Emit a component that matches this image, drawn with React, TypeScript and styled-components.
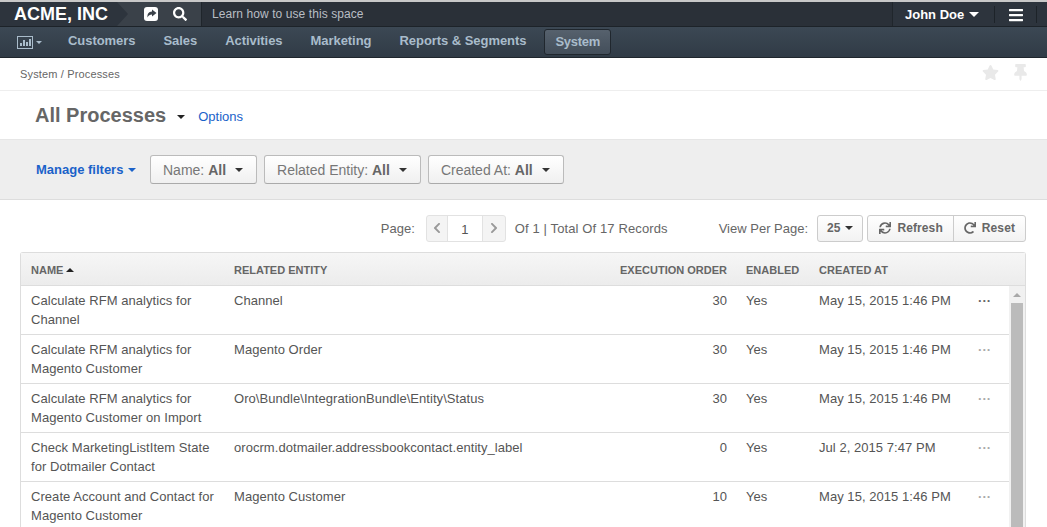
import React, { FC } from 'react';
import styled, { createGlobalStyle } from 'styled-components';
import {
  FaBars,
  FaChevronLeft,
  FaChevronRight,
  FaRedo,
  FaSearch,
  FaStar,
  FaSync,
  FaThumbtack,
} from 'react-icons/fa';

const GlobalStyle = createGlobalStyle`
  html, body {
    margin: 0;
    height: 527px;
    overflow: hidden;
    background: #fff;
    font-family: "Liberation Sans", Arial, sans-serif;
    color: #555;
  }
  * { box-sizing: border-box; }
`;

const Page = styled.div`
  width: 1047px;
  height: 527px;
  overflow: hidden;
`;

const TopBar = styled.header`
  display: flex;
  height: 27px;
  background: #2d343d;
  border-top: 2px solid #c8c8c8;
  border-bottom: 1px solid #1d2329;
  color: #fff;
`;

const Brand = styled.div`
  position: relative;
  width: 117px;
  padding-left: 14px;
  background: #2d343d;
  font-size: 18px;
  line-height: 24px;
  font-weight: bold;
  &::after {
    content: '';
    position: absolute;
    right: -11px;
    top: 0;
    border-left: 11px solid #2d343d;
    border-top: 12px solid transparent;
    border-bottom: 12px solid transparent;
  }
`;

const QuickIcons = styled.div`
  display: flex;
  align-items: center;
  gap: 15px;
  width: 84px;
  padding-left: 27px;
  background: #3a4149;
  font-size: 14px;
  svg { display: block; }
`;

const Hint = styled.div`
  flex: 1;
  padding-left: 10px;
  background: #2a3038;
  border-left: 1px solid #1f252b;
  font-size: 12px;
  letter-spacing: 0.08px;
  line-height: 24px;
  color: #b9bec4;
`;

const UserMenu = styled.div`
  display: flex;
  align-items: center;
  gap: 5px;
  width: 102px;
  padding-left: 12px;
  border-left: 1px solid #20262c;
  background: #2d343d;
  font-size: 13px;
  font-weight: bold;
`;

const MenuButton = styled.div`
  display: flex;
  align-items: center;
  justify-content: center;
  width: 43px;
  margin: 4px 0 3px;
  border-left: 1px solid #1d2329;
  border-right: 1px solid #1d2329;
  font-size: 16px;
`;

const Trailing = styled.div`
  width: 10px;
`;

const Caret = styled.span<{ $size?: number; $color?: string; $up?: boolean }>`
  display: inline-block;
  width: 0;
  height: 0;
  border-left: ${(p) => p.$size ?? 4}px solid transparent;
  border-right: ${(p) => p.$size ?? 4}px solid transparent;
  ${(p) => (p.$up ? 'border-bottom' : 'border-top')}: ${(p) => p.$size ?? 4}px solid ${(p) => p.$color ?? 'currentColor'};
`;

const Nav = styled.nav`
  display: flex;
  align-items: center;
  height: 31px;
  padding-left: 17px;
  background: linear-gradient(#3c4854, #303b46);
  border-bottom: 1px solid #1f262d;
  color: #a9bccb;
  font-size: 13px;
  font-weight: bold;
  letter-spacing: -0.05px;
`;

const ChartMenu = styled.div`
  display: flex;
  align-items: center;
  gap: 3px;
  width: 38px;
`;

const NavItem = styled.a<{ $active?: boolean }>`
  height: 26px;
  margin-right: ${(p) => (p.$active ? 0 : '1px')};
  padding: 0 ${(p) => (p.$active ? '10px' : '14px')} 0 ${(p) => (p.$active ? '10px' : '13px')};
  line-height: 24px;
  ${(p) =>
    p.$active &&
    `
    margin-left: 3px;
    border: 1px solid #20272e;
    border-radius: 3px;
    background: linear-gradient(#56616d, #434e5a);
    letter-spacing: -0.3px;
  `}
`;

const Crumbs = styled.div`
  display: flex;
  align-items: center;
  justify-content: space-between;
  height: 33px;
  padding: 0 18px 0 20px;
  border-bottom: 1px solid #eee;
  font-size: 11px;
  letter-spacing: 0.15px;
  color: #666;
`;

const PageActions = styled.div`
  display: flex;
  align-items: center;
  gap: 13px;
  margin-bottom: 3px;
  color: #e9e9e9;
  font-size: 17px;
  svg { display: block; }
`;

const TitleBar = styled.div`
  display: flex;
  align-items: center;
  height: 48px;
  padding-left: 35px;
  color: #666;
`;

const Title = styled.h1`
  margin: 0 7px 0 0;
  font-size: 20px;
  line-height: 48px;
  font-weight: bold;
`;

const TitleCaret = styled.span`
  display: flex;
  margin: 3px 13px 0 4px;
  color: #222;
`;

const BlueLink = styled.a`
  margin-top: 2px;
  color: #1a62c9;
  font-size: 13px;
`;

const FilterBar = styled.div`
  display: flex;
  align-items: center;
  gap: 7px;
  height: 61px;
  padding-left: 36px;
  background: #eee;
  border-top: 1px solid #e6e6e6;
  border-bottom: 1px solid #ddd;
`;

const ManageFilters = styled.a`
  display: flex;
  align-items: center;
  gap: 5px;
  width: 107px;
  color: #1a62c9;
  font-size: 13px;
  font-weight: bold;
`;

const FilterButton = styled.div`
  display: flex;
  align-items: center;
  gap: 9px;
  height: 29px;
  padding: 0 13px 0 12px;
  border: 1px solid #bbb;
  border-bottom-color: #aaa;
  border-radius: 3px;
  background: linear-gradient(#fff, #f0f0f0);
  font-size: 14px;
  color: #777;
  b { color: #666; }
`;

const Pager = styled.div`
  display: flex;
  align-items: center;
  justify-content: flex-end;
  height: 52px;
  padding: 4px 21px 0 0;
  font-size: 13px;
  color: #666;
`;

const PageLabel = styled.span`
  margin-right: 11px;
`;

const PageBox = styled.div`
  display: flex;
  height: 27px;
  margin-right: 9px;
  border: 1px solid #e2e2e2;
  border-radius: 3px;
  background: #f4f4f4;
  color: #999;
  font-size: 12px;
`;

const PageArrow = styled.span<{ $wide?: boolean }>`
  display: flex;
  align-items: center;
  justify-content: center;
  width: ${(p) => (p.$wide ? 22 : 20)}px;
`;

const PageInput = styled.span`
  width: 36px;
  padding-top: 2px;
  background: #fff;
  border-left: 1px solid #e2e2e2;
  border-right: 1px solid #e2e2e2;
  color: #555;
  font-size: 13px;
  line-height: 23px;
  text-align: center;
`;

const PageTotal = styled.span`
  letter-spacing: 0.12px;
`;

const PerPageLabel = styled.span`
  margin: 0 9px 0 51px;
`;

const PerPage = styled.div`
  display: flex;
  align-items: center;
  gap: 5px;
  height: 27px;
  margin-right: 4px;
  padding: 0 9px;
  border: 1px solid #ccc;
  border-radius: 3px;
  background: linear-gradient(#fff, #f2f2f2);
  font-size: 12px;
  font-weight: bold;
`;

const ActionGroup = styled.div`
  display: flex;
  height: 27px;
  border: 1px solid #ccc;
  border-radius: 3px;
  background: linear-gradient(#fff, #f2f2f2);
  color: #666;
  font-size: 12px;
  font-weight: bold;
  letter-spacing: 0.1px;
`;

const ActionButton = styled.div<{ $wide?: boolean }>`
  display: flex;
  align-items: center;
  gap: 6px;
  padding: 0 10px 0 ${(p) => (p.$wide ? 11 : 10)}px;
  & + & { border-left: 1px solid #ccc; }
  svg { font-size: 12px; }
`;

const Grid = styled.div`
  width: 1006px;
  margin-left: 20px;
  border: 1px solid #ddd;
  border-bottom: 0;
  border-radius: 3px 3px 0 0;
`;

const columns = '203px 385px 127px 73px 150px 50px';

const HeaderRow = styled.div`
  display: grid;
  grid-template-columns: ${columns} 1fr;
  align-items: center;
  height: 33px;
  padding-top: 1px;
  background: linear-gradient(#f6f6f6, #ececec);
  border-bottom: 1px solid #ddd;
  font-size: 11px;
  font-weight: bold;
  color: #666;
`;

const HeaderCell = styled.div<{ $right?: boolean }>`
  display: flex;
  align-items: center;
  gap: 3px;
  justify-content: ${(p) => (p.$right ? 'flex-end' : 'flex-start')};
  padding: 0 ${(p) => (p.$right ? '9px' : '10px')} 0 10px;
  white-space: nowrap;
`;

const GridBody = styled.div`
  display: flex;
`;

const Rows = styled.div`
  width: 988px;
`;

const Row = styled.div`
  display: grid;
  grid-template-columns: ${columns};
  height: 49px;
  border-bottom: 1px solid #ddd;
  font-size: 13px;
  letter-spacing: 0.05px;
  line-height: 19px;
  color: #555;
`;

const Cell = styled.div<{ $right?: boolean }>`
  padding: 5px ${(p) => (p.$right ? '9px' : '4px')} 0 10px;
  text-align: ${(p) => (p.$right ? 'right' : 'left')};
`;

const DateCell = styled(Cell)`
  white-space: nowrap;
`;

const Dots = styled.div<{ $dark?: boolean }>`
  padding: 5px 0 0 19px;
  color: ${(p) => (p.$dark ? '#666' : '#aaa')};
  font-size: 13px;
  font-weight: bold;
  line-height: 19px;
`;

const ScrollTrack = styled.div`
  width: 16px;
  padding: 0 2px;
  background: #f1f1f1;
`;

const ScrollUp = styled.div`
  display: flex;
  justify-content: center;
  height: 17px;
  padding-top: 7px;
  color: #a8a8a8;
`;

const ScrollThumb = styled.div`
  height: 240px;
  background: #bbb;
`;

const NavChart: FC = () => (
  <svg width="16" height="13" viewBox="0 0 16 13" fill="none">
    <rect x="0.5" y="0.5" width="15" height="12" stroke="#a9bccb" />
    <path d="M3 10V7h2v3zM6 10V4h2v6zM9 10V6h2v4zM12 10V3h2v7z" fill="#a9bccb" />
  </svg>
);

// solid share-square, the arrow is cut out of the white tile
const ShareTile: FC = () => (
  <svg width="14" height="14" viewBox="0 0 14 14">
    <rect width="14" height="14" rx="3" fill="#fff" />
    <path d="M8 2.5 12.5 6 8 9.5V7.4C6 7.4 4.4 8 3.6 10.6 3 7 4.8 4.8 8 4.6z" fill="#3a4149" />
  </svg>
);

const records = [
  ['Calculate RFM analytics for Channel', 'Channel', '30', 'May 15, 2015 1:46 PM'],
  ['Calculate RFM analytics for Magento Customer', 'Magento Order', '30', 'May 15, 2015 1:46 PM'],
  ['Calculate RFM analytics for Magento Customer on Import', 'Oro\\Bundle\\IntegrationBundle\\Entity\\Status', '30', 'May 15, 2015 1:46 PM'],
  ['Check MarketingListItem State for Dotmailer Contact', 'orocrm.dotmailer.addressbookcontact.entity_label', '0', 'Jul 2, 2015 7:47 PM'],
  ['Create Account and Contact for Magento Customer', 'Magento Customer', '10', 'May 15, 2015 1:46 PM'],
];

const navItems = ['Customers', 'Sales', 'Activities', 'Marketing', 'Reports & Segments'];
const filters = ['Name', 'Related Entity', 'Created At'];

const App: FC = () => (
  <Page>
    <GlobalStyle />
    <TopBar>
      <Brand>ACME, INC</Brand>
      <QuickIcons>
        <ShareTile />
        <FaSearch />
      </QuickIcons>
      <Hint>Learn how to use this space</Hint>
      <UserMenu>
        John Doe <Caret $size={5} />
      </UserMenu>
      <MenuButton>
        <FaBars />
      </MenuButton>
      <Trailing />
    </TopBar>
    <Nav>
      <ChartMenu>
        <NavChart />
        <Caret $size={3} />
      </ChartMenu>
      {navItems.map((item) => (
        <NavItem key={item}>{item}</NavItem>
      ))}
      <NavItem $active>System</NavItem>
    </Nav>
    <Crumbs>
      <span>System / Processes</span>
      <PageActions>
        <FaStar />
        <FaThumbtack />
      </PageActions>
    </Crumbs>
    <TitleBar>
      <Title>All Processes</Title>
      <TitleCaret>
        <Caret />
      </TitleCaret>
      <BlueLink>Options</BlueLink>
    </TitleBar>
    <FilterBar>
      <ManageFilters>
        Manage filters <Caret $size={4} />
      </ManageFilters>
      {filters.map((filter) => (
        <FilterButton key={filter}>
          <span>
            {filter}: <b>All</b>
          </span>
          <Caret $color="#333" />
        </FilterButton>
      ))}
    </FilterBar>
    <Pager>
      <PageLabel>Page:</PageLabel>
      <PageBox>
        <PageArrow>
          <FaChevronLeft />
        </PageArrow>
        <PageInput>1</PageInput>
        <PageArrow $wide>
          <FaChevronRight />
        </PageArrow>
      </PageBox>
      <PageTotal>Of 1 | Total Of 17 Records</PageTotal>
      <PerPageLabel>View Per Page:</PerPageLabel>
      <PerPage>
        25 <Caret $color="#333" />
      </PerPage>
      <ActionGroup>
        <ActionButton $wide>
          <FaSync /> Refresh
        </ActionButton>
        <ActionButton>
          <FaRedo /> Reset
        </ActionButton>
      </ActionGroup>
    </Pager>
    <Grid>
      <HeaderRow>
        <HeaderCell>
          NAME <Caret $up $color="#222" />
        </HeaderCell>
        <HeaderCell>RELATED ENTITY</HeaderCell>
        <HeaderCell $right>EXECUTION ORDER</HeaderCell>
        <HeaderCell>ENABLED</HeaderCell>
        <HeaderCell>CREATED AT</HeaderCell>
      </HeaderRow>
      <GridBody>
        <Rows>
          {records.map(([name, entity, order, created], i) => (
            <Row key={name}>
              <Cell>{name}</Cell>
              <Cell>{entity}</Cell>
              <Cell $right>{order}</Cell>
              <Cell>Yes</Cell>
              <DateCell>{created}</DateCell>
              <Dots $dark={i === 0}>···</Dots>
            </Row>
          ))}
        </Rows>
        <ScrollTrack>
          <ScrollUp>
            <Caret $up />
          </ScrollUp>
          <ScrollThumb />
        </ScrollTrack>
      </GridBody>
    </Grid>
  </Page>
);

export default App;
